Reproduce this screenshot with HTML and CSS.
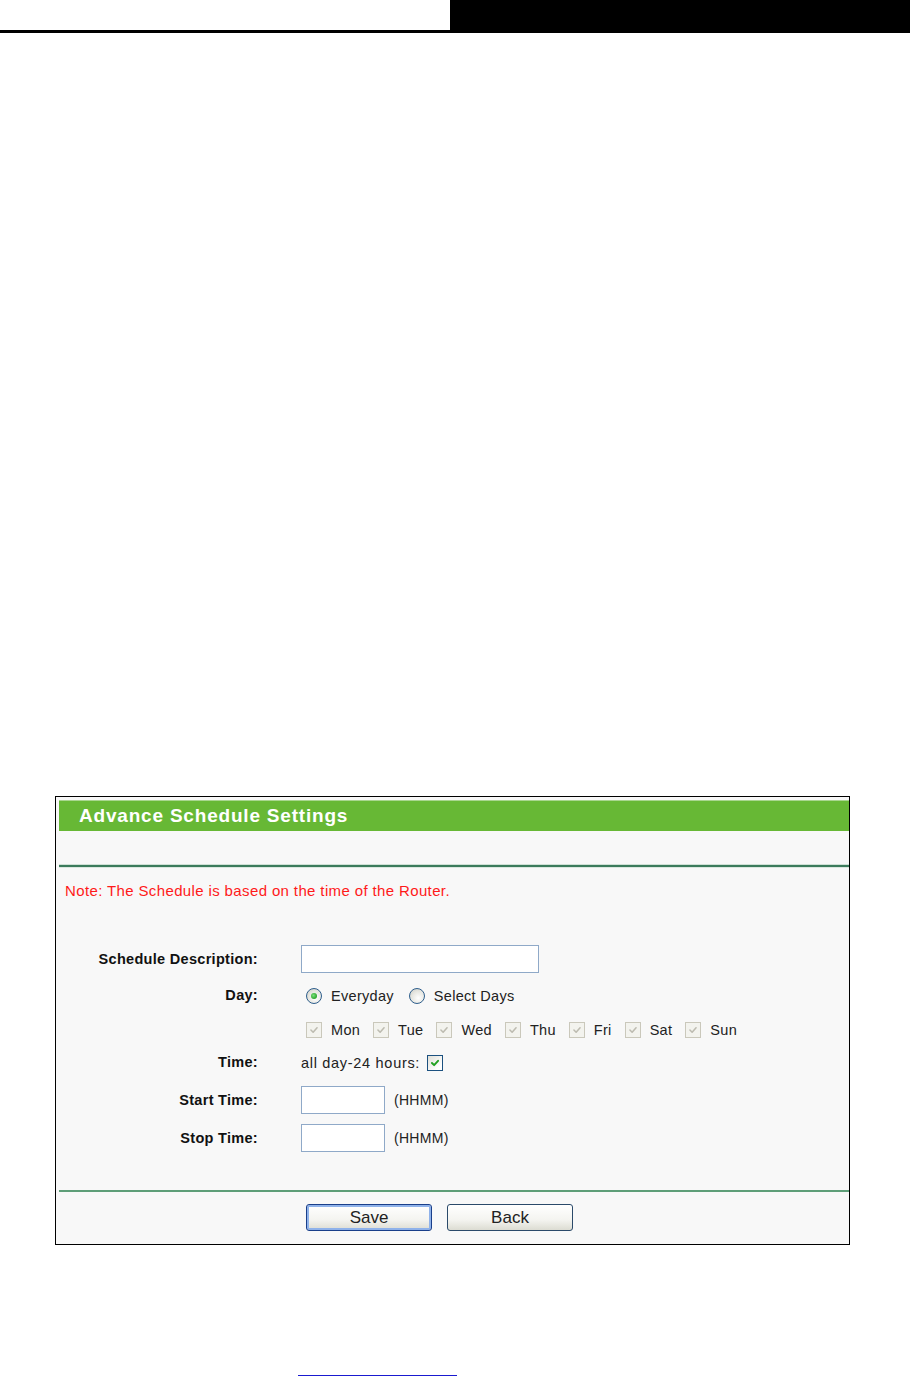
FILE: index.html
```html
<!DOCTYPE html>
<html>
<head>
<meta charset="utf-8">
<title>Advance Schedule Settings</title>
<link rel="stylesheet" href="styles.css">
</head>
<body>
<div class="topbar">
  <div class="topbar-left"></div>
  <div class="topbar-right"></div>
</div>

<div class="panel">
  <div class="title-bar">Advance Schedule Settings</div>
  <div class="rule rule-top"></div>
  <div class="note">Note: The Schedule is based on the time of the Router.</div>

  <div class="form">
    <div class="row row-desc">
      <div class="label">Schedule Description:</div>
      <div class="value"><span class="input input-wide"></span></div>
    </div>
    <div class="row row-day">
      <div class="label">Day:</div>
      <div class="value">
        <span class="radio checked"></span><span class="opt-text">Everyday</span>
        <span class="radio"></span><span class="opt-text">Select Days</span>
      </div>
    </div>
    <div class="row row-days">
      <div class="label"></div>
      <div class="value days">
        <span class="cb disabled"><svg viewBox="0 0 16 16"><path d="M4.5 8 L7 10.5 L11.5 5.5"/></svg></span><span class="day-text">Mon</span>
        <span class="cb disabled"><svg viewBox="0 0 16 16"><path d="M4.5 8 L7 10.5 L11.5 5.5"/></svg></span><span class="day-text">Tue</span>
        <span class="cb disabled"><svg viewBox="0 0 16 16"><path d="M4.5 8 L7 10.5 L11.5 5.5"/></svg></span><span class="day-text">Wed</span>
        <span class="cb disabled"><svg viewBox="0 0 16 16"><path d="M4.5 8 L7 10.5 L11.5 5.5"/></svg></span><span class="day-text">Thu</span>
        <span class="cb disabled"><svg viewBox="0 0 16 16"><path d="M4.5 8 L7 10.5 L11.5 5.5"/></svg></span><span class="day-text">Fri</span>
        <span class="cb disabled"><svg viewBox="0 0 16 16"><path d="M4.5 8 L7 10.5 L11.5 5.5"/></svg></span><span class="day-text">Sat</span>
        <span class="cb disabled"><svg viewBox="0 0 16 16"><path d="M4.5 8 L7 10.5 L11.5 5.5"/></svg></span><span class="day-text">Sun</span>
      </div>
    </div>
    <div class="row row-time">
      <div class="label">Time:</div>
      <div class="value">
        <span class="plain">all day-24 hours:</span>
        <span class="cb active"><svg viewBox="0 0 16 16"><path d="M4.5 8 L7 10.5 L11.5 5.5"/></svg></span>
      </div>
    </div>
    <div class="row row-start">
      <div class="label">Start Time:</div>
      <div class="value"><span class="input input-short"></span><span class="hint">(HHMM)</span></div>
    </div>
    <div class="row row-stop">
      <div class="label">Stop Time:</div>
      <div class="value"><span class="input input-short"></span><span class="hint">(HHMM)</span></div>
    </div>
  </div>

  <div class="rule rule-bottom"></div>
  <div class="buttons">
    <button class="btn btn-default">Save</button>
    <button class="btn">Back</button>
  </div>
</div>

<div class="footer-line"></div>
</body>
</html>
```

FILE: styles.css
```css
html, body {
  margin: 0;
  padding: 0;
  background: #ffffff;
  font-family: "Liberation Sans", Arial, sans-serif;
}

.topbar {
  display: flex;
  height: 33px;
}
.topbar-left {
  width: 450px;
  height: 30px;
  border-bottom: 3px solid #000;
}
.topbar-right {
  flex: 1;
  background: #000;
}

.panel {
  box-sizing: border-box;
  width: 795px;
  margin: 763px 0 0 55px;
  border: 1px solid #000;
  background: #f8f8f8;
  padding: 3px 0 13px 3px;
}

.title-bar {
  height: 30px;
  border-top: 1px solid #a9d68f;
  background: #67b835;
  color: #fff;
  font-weight: bold;
  font-size: 19px;
  letter-spacing: 0.8px;
  line-height: 30px;
  padding-left: 20px;
}

.rule {
  height: 2px;
}
.rule-top {
  margin-top: 33px;
  background: #3c7b5c;
  border-top: 1px solid #cfe1d6;
  border-bottom: 1px solid #dbe7df;
}
.rule-bottom {
  margin-top: 33px;
  background: #5e9e78;
}

.note {
  margin-top: 14px;
  padding-left: 6px;
  color: #ff1a1a;
  font-size: 15px;
  letter-spacing: 0.37px;
  line-height: 18px;
}

.form {
  margin-top: 41px;
}
.row {
  display: flex;
  align-items: center;
}
.row-desc { height: 36px; }
.row-day { height: 38px; }
.row-days { height: 30px; }
.row-time { height: 36px; }
.row-start { height: 37px; }
.row-stop { height: 39px; }

.label {
  width: 199px;
  margin-right: 43px;
  text-align: right;
  font-weight: bold;
  font-size: 14.5px;
  color: #111;
  letter-spacing: 0.3px;
}
.row-day .label, .row-time .label {
  margin-top: -3px;
}
.value {
  display: flex;
  align-items: center;
  font-size: 14.5px;
  letter-spacing: 0.3px;
  color: #222;
}

.input {
  box-sizing: border-box;
  display: inline-block;
  height: 28px;
  background: #fff;
  border: 1px solid #8fa9c8;
}
.input-wide { width: 238px; }
.input-short { width: 84px; }
.hint {
  margin-left: 9px;
  font-size: 14px;
}

.radio {
  box-sizing: border-box;
  position: relative;
  width: 16px;
  height: 16px;
  border-radius: 50%;
  border: 1px solid #2e5e8c;
  background: radial-gradient(circle at 60% 65%, #ffffff 0%, #e6e6e0 55%, #c8c8c0 100%);
  margin-left: 5px;
}
.radio.checked::after {
  content: "";
  position: absolute;
  left: 4px;
  top: 4px;
  width: 6px;
  height: 6px;
  border-radius: 50%;
  background: radial-gradient(circle at 40% 40%, #7de07d 0%, #2aa52a 70%);
}
.opt-text {
  margin-left: 9px;
  margin-right: 10px;
}

.cb {
  box-sizing: border-box;
  display: inline-flex;
  width: 16px;
  height: 16px;
}
.cb svg {
  width: 14px;
  height: 14px;
  fill: none;
  stroke-width: 1.8;
  stroke-linecap: round;
  stroke-linejoin: round;
}
.cb.disabled {
  border: 1px solid #cac8bb;
  background: #f3f3ee;
  margin-left: 5px;
}
.cb.disabled svg { stroke: #bdbbb0; }
.cb.active {
  border: 1px solid #1c5180;
  background: linear-gradient(135deg, #e0e0d8 0%, #ffffff 80%);
  margin-left: 7px;
}
.cb.active svg { stroke: #21a121; stroke-width: 2.2; }
.day-text {
  margin-left: 9px;
  margin-right: 8px;
}
.plain {
  color: #222;
  letter-spacing: 0.7px;
}

.buttons {
  display: flex;
  gap: 15px;
  margin-top: 12px;
  padding-left: 247px;
}
.btn {
  box-sizing: border-box;
  width: 126px;
  height: 27px;
  border: 1px solid #2b4a6a;
  border-radius: 3px;
  background: linear-gradient(#ffffff 0%, #f4f4f0 60%, #dcdcd2 100%);
  font-family: "Liberation Sans", Arial, sans-serif;
  font-size: 17px;
  color: #222;
  padding: 0;
  line-height: 25px;
}
.btn-default {
  border-color: #1a3f8a;
  box-shadow: inset 0 0 0 2px #8fb2ea;
}

.footer-line {
  margin: 130px 0 0 298px;
  width: 159px;
  height: 1px;
  background: #1a1ad0;
}
```
